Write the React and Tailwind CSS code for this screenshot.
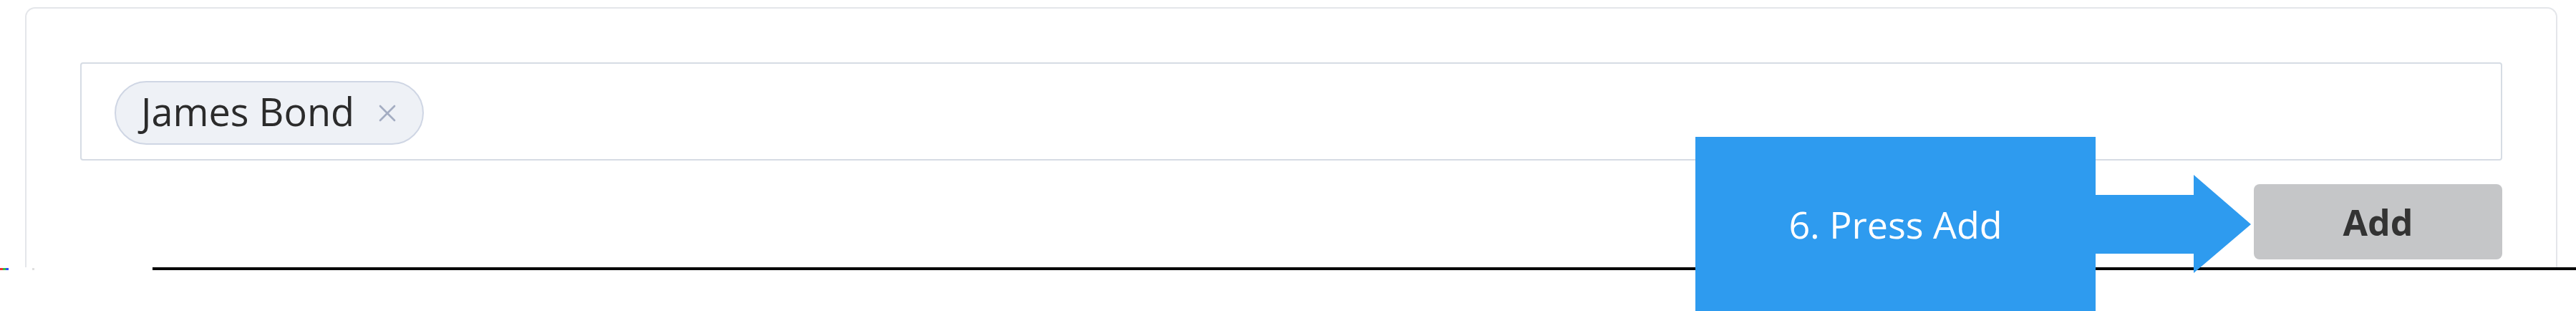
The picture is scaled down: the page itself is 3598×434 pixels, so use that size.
import { X } from 'lucide-react';

export default function App() {
  return (
    <div className="relative w-[3598px] h-[434px] overflow-hidden bg-white font-['Open_Sans',sans-serif]">
      {/* Card */}
      <div className="ml-[35px] mt-[10px] w-[3537px] h-[363px] border-2 border-b-0 border-[#e4e6ea] rounded-t-[14px] px-[75px] pt-[75px]">
        {/* Tag input */}
        <div className="h-[137px] border-2 border-[#d6dce4] rounded-[4px] pl-[46px] pt-[24px]">
          <div className="inline-flex items-center h-[89px] pl-[35px] pr-[29px] rounded-full bg-[#eef1f6] border-2 border-[#cfd6e4]">
            <span className="text-[54px] leading-none text-[#2b2b2b] -mt-[6px]">James Bond</span>
            <X className="ml-[26px] w-[40px] h-[40px] text-[#a4adc2]" strokeWidth={1.6} />
          </div>
        </div>

        <div className="flex justify-end mt-[33px]">
          <button className="w-[347px] h-[105px] rounded-[8px] bg-[#c5c6c8] text-[50px] font-bold text-[#333] leading-none">
            Add
          </button>
        </div>
      </div>

      {/* Bottom rule */}
      <div className="flex items-center h-[4px]">
        <div className="flex h-[3px] w-[12px]">
          <span className="flex-1 bg-[#f03030]" />
          <span className="flex-1 bg-[#30c040]" />
          <span className="flex-1 bg-[#3050f0]" />
        </div>
        <span className="ml-[33px] w-[3px] h-[3px] bg-[#e0e0e0]" />
        <div className="ml-[165px] flex-1 h-[4px] bg-black" />
      </div>

      {/* Callout */}
      <div className="absolute left-[2368px] top-[191px] w-[559px] h-[244px] bg-[#2e9bef] flex items-center justify-center">
        <span className="text-[52px] text-white leading-none">6. Press Add</span>
      </div>
      <svg className="absolute left-[2926px] top-[244px]" width="218" height="137" viewBox="0 0 218 137">
        <polygon points="0,28 138,28 138,0 218,69 138,137 138,110 0,110" fill="#2e9bef" />
      </svg>
    </div>
  );
}
